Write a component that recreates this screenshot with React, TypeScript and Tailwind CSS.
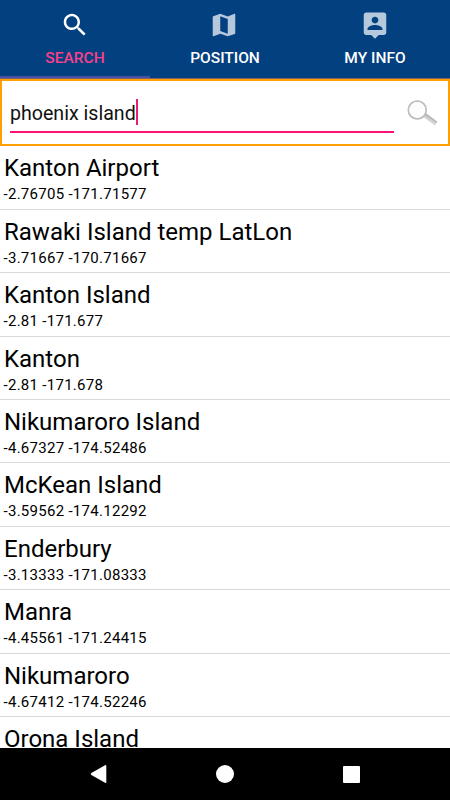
import React, { useState } from "react";
import clsx from "clsx";

const tabs = [
  {
    label: "SEARCH",
    icon: "M15.5 14h-.79l-.28-.27C15.41 12.59 16 11.11 16 9.5 16 5.91 13.09 3 9.5 3S3 5.91 3 9.5 5.91 16 9.5 16c1.61 0 3.09-.59 4.23-1.57l.27.28v.79l5 4.99L20.49 19l-4.99-5zm-6 0C7.01 14 5 11.99 5 9.5S7.01 5 9.5 5 14 7.01 14 9.5 11.99 14 9.5 14z",
  },
  {
    label: "POSITION",
    icon: "M20.5 3l-.16.03L15 5.1 9 3 3.36 4.9c-.21.07-.36.25-.36.48V20.5c0 .28.22.5.5.5l.16-.03L9 18.9l6 2.1 5.64-1.9c.21-.07.36-.25.36-.48V3.5c0-.28-.22-.5-.5-.5zM15 19l-6-2.11V5l6 2.11V19z",
    iconClass: "mr-[2px]",
  },
  {
    label: "MY INFO",
    icon: "M19 2H5c-1.11 0-2 .9-2 2v14c0 1.1.89 2 2 2h4l3 3 3-3h4c1.1 0 2-.9 2-2V4c0-1.1-.9-2-2-2zm-7 3.3c1.49 0 2.7 1.21 2.7 2.7 0 1.49-1.21 2.7-2.7 2.7-1.49 0-2.7-1.21-2.7-2.7 0-1.49 1.21-2.7 2.7-2.7zM18 16H6v-.9c0-2 4-3.1 6-3.1s6 1.1 6 3.1v.9z",
  },
];

const places = [
  { name: "Kanton Airport", coords: "-2.76705 -171.71577" },
  { name: "Rawaki Island temp LatLon", coords: "-3.71667 -170.71667" },
  { name: "Kanton Island", coords: "-2.81 -171.677" },
  { name: "Kanton", coords: "-2.81 -171.678" },
  { name: "Nikumaroro Island", coords: "-4.67327 -174.52486" },
  { name: "McKean Island", coords: "-3.59562 -174.12292" },
  { name: "Enderbury", coords: "-3.13333 -171.08333" },
  { name: "Manra", coords: "-4.45561 -171.24415" },
  { name: "Nikumaroro", coords: "-4.67412 -174.52246" },
  { name: "Orona Island", coords: "" },
];

function Magnifier() {
  return (
    <svg viewBox="0 0 32 28" className="h-7 w-8">
      <defs>
        <linearGradient id="handle" gradientUnits="userSpaceOnUse" x1="23" y1="22" x2="26" y2="17.5">
          <stop offset="0" stopColor="#dedede" />
          <stop offset="0.5" stopColor="#c6c6c6" />
          <stop offset="1" stopColor="#9a9a9a" />
        </linearGradient>
      </defs>
      <path d="M18 16.6 20.6 14.8 31.4 22.8 28.8 26.6 18.4 19z" fill="url(#handle)" />
      <circle cx="11.3" cy="11" r="9" fill="#fdfdfd" stroke="#a8a8a8" strokeWidth="1.5" />
      <circle cx="11.3" cy="11" r="9.2" fill="none" stroke="#e2e2e2" strokeWidth="0.5" />
    </svg>
  );
}

export default function App() {
  const [active, setActive] = useState(0);

  return (
    <div className="flex h-[800px] w-[450px] flex-col overflow-hidden bg-white font-[Roboto,sans-serif] text-black">
      <div className="grid h-[79px] shrink-0 grid-cols-3 border-b border-[#80606a] bg-[#03407f]">
        {tabs.map((tab, i) => (
          <button
            key={tab.label}
            onClick={() => setActive(i)}
            className={clsx(
              "flex flex-col items-center border-b-2 pt-[10px]",
              i === active ? "border-[#4450a5] text-[#f8408a]" : "border-transparent text-white"
            )}
          >
            <svg
              viewBox="0 0 24 24"
              className={clsx("h-[30px] w-[30px]", tab.iconClass, i === active ? "fill-white" : "fill-[#b5c8dc]")}
            >
              <path d={tab.icon} />
            </svg>
            <span className="mt-[8px] text-[15.5px] leading-5 font-medium">{tab.label}</span>
          </button>
        ))}
      </div>

      {/* Search box */}
      <div className="flex h-[67px] shrink-0 border-2 border-[#ffa000] pl-2">
        <div className="mt-[14px] flex h-[38px] w-[384px] items-start border-b-2 border-[#ff1177]">
          <span className="mt-[7px] text-[19.6px] leading-6 text-[#111]">phoenix island</span>
          <span className="mt-[4px] h-[26px] w-[2px] bg-[#e91e73]" />
        </div>
        <div className="mt-[18px] ml-[12px]">
          <Magnifier />
        </div>
      </div>

      {/* Results */}
      <div className="min-h-0 flex-1 overflow-hidden pt-[0.2px]">
        {places.map((place) => (
          <div key={place.name} className="h-[63.45px] border-b border-[#d9d9d9] pl-1">
            <div className="pt-[8px] text-[24px] leading-7">{place.name}</div>
            <div className="-ml-[0.5px] mt-[3px] text-[15px] leading-[18px] tracking-[0.28px]">{place.coords}</div>
          </div>
        ))}
      </div>

      {/* System navigation bar */}
      <div className="flex h-[52px] shrink-0 items-center justify-between bg-black pr-[90px] pl-[89px]">
        <svg viewBox="0 0 20 20" className="h-5 w-5 fill-white">
          <path d="M16 1.2Q17.3.6 17.3 2V18Q17.3 19.4 16 18.7L2.4 11Q1 10 2.4 9z" />
        </svg>
        <span className="mr-[3px] h-[18px] w-[18px] rounded-full bg-white" />
        <span className="h-[17px] w-[17px] rounded-[1px] bg-white" />
      </div>
    </div>
  );
}
